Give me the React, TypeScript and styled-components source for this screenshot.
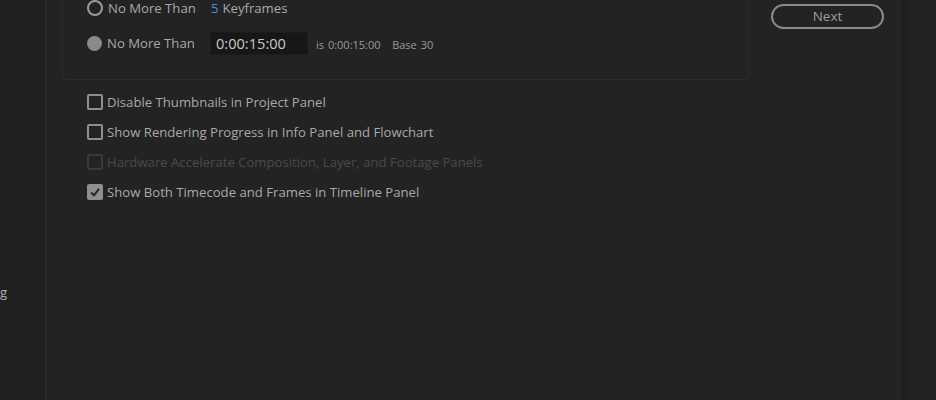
import React from "react";
import styled, { createGlobalStyle } from "styled-components";

const GlobalStyle = createGlobalStyle`
  html, body {
    margin: 0;
    padding: 0;
    background: #232323;
    overflow: hidden;
  }
  body {
    font-family: "Open Sans", "Noto Sans", sans-serif;
  }
`;

const Window = styled.div`
  display: flex;
  width: 936px;
  height: 400px;
  overflow: hidden;
  background: #232323;
`;

const Sidebar = styled.div`
  width: 45px;
  flex: none;
  background: #202020;
  border-right: 1px solid #2e2e2e;
  position: relative;
  overflow: hidden;
`;

const SideLabel = styled.span`
  position: absolute;
  right: 38px;
  top: 283px;
  font-size: 13px;
  color: #b4b4b4;
  white-space: nowrap;
`;

const Main = styled.div`
  flex: 1;
  display: flex;
  padding-left: 16px;
  padding-right: 18px;
`;

const Content = styled.div`
  width: 687px;
  display: flex;
  flex-direction: column;
`;

const Group = styled.div`
  margin-top: -30px;
  height: 110px;
  border: 1px solid #2c2c2c;
  border-top: none;
  border-radius: 0 0 3px 3px;
  padding: 30px 0 0 23px;
  box-sizing: border-box;
  display: flex;
  flex-direction: column;
`;

const Row = styled.div<{ $top?: number }>`
  display: flex;
  align-items: center;
  height: 16px;
  margin-top: ${(p) => p.$top ?? 0}px;
  gap: 5px;
`;

const Radio = styled.span<{ $filled?: boolean }>`
  width: ${(p) => (p.$filled ? 15 : 12)}px;
  height: ${(p) => (p.$filled ? 15 : 12)}px;
  border-radius: 50%;
  border: ${(p) => (p.$filled ? "none" : "2px solid #9a9a9a")};
  background: ${(p) => (p.$filled ? "#8a8a8a" : "transparent")};
  flex: none;
  margin-left: 1px;
`;

const Label = styled.span<{ $dim?: boolean }>`
  font-size: 13.15px;
  color: ${(p) => (p.$dim ? "#4a4a4a" : "#a9a9a9")};
  white-space: nowrap;
`;

const RadioLabel = styled(Label)`
  width: 98px;
`;

const Blue = styled.span`
  color: #4d8fd6;
  margin-right: 4px;
`;

const TimeInput = styled.div`
  width: 98px;
  height: 23px;
  box-sizing: border-box;
  background: #171717;
  border: 1px solid #1c1c1c;
  border-radius: 2px;
  color: #c8c8c8;
  font-size: 14.6px;
  padding-left: 5px;
  display: flex;
  align-items: center;
  flex: none;
`;

const Small = styled.span`
  font-size: 11px;
  color: #9a9a9a;
  margin-left: 3px;
  white-space: nowrap;
  padding-top: 2px;
  word-spacing: 1px;
`;

const Checks = styled.div`
  display: flex;
  flex-direction: column;
  padding: 7px 0 0 25px;
`;

const CheckRow = styled.div`
  display: flex;
  align-items: center;
  height: 30px;
  gap: 4px;
`;

const Box = styled.span<{ $dim?: boolean; $checked?: boolean }>`
  width: 16px;
  height: 16px;
  box-sizing: border-box;
  border: 2px solid ${(p) => (p.$dim ? "#3a3a3a" : "#8e8e8e")};
  border-radius: 2px;
  background: ${(p) => (p.$checked ? "#8e8e8e" : "transparent")};
  display: flex;
  align-items: center;
  justify-content: center;
  flex: none;
`;

const Side = styled.div`
  flex: 1;
  display: flex;
  justify-content: center;
  padding-top: 4px;
  padding-left: 22px;
`;

const NextButton = styled.button`
  width: 113px;
  height: 25px;
  border: 2px solid #8a8a8a;
  border-radius: 13px;
  background: transparent;
  color: #9c9c9c;
  font-family: "Open Sans", "Noto Sans", sans-serif;
  font-size: 13.5px;
  padding: 0;
  line-height: 1;
`;

const RightEdge = styled.div`
  width: 34px;
  flex: none;
  background: linear-gradient(to right, #1b1b1b 0px, #1f1f1f 4px, #222 10px, #232323 34px);
`;

const checks = [
  { text: "Disable Thumbnails in Project Panel" },
  { text: "Show Rendering Progress in Info Panel and Flowchart" },
  { text: "Hardware Accelerate Composition, Layer, and Footage Panels", dim: true },
  { text: "Show Both Timecode and Frames in Timeline Panel", checked: true },
];

export default function App() {
  return (
    <Window>
      <GlobalStyle />
      <Sidebar>
        <SideLabel>Rendering</SideLabel>
      </Sidebar>
      <Main>
        <Content>
          <Group>
            <Row>
              <Radio />
              <RadioLabel>No More Than</RadioLabel>
              <Label>
                <Blue>5</Blue>Keyframes
              </Label>
            </Row>
            <Row $top={19}>
              <Radio $filled />
              <RadioLabel>No More Than</RadioLabel>
              <TimeInput>0:00:15:00</TimeInput>
              <Small>is 0:00:15:00&nbsp;&nbsp;&nbsp;Base 30</Small>
            </Row>
          </Group>
          <Checks>
            {checks.map((c) => (
              <CheckRow key={c.text}>
                <Box $dim={c.dim} $checked={c.checked}>
                  {c.checked && (
                    <svg width="12" height="12" viewBox="0 0 12 12">
                      <path d="M2 6.5 L5 9.2 L10 2.8" fill="none" stroke="#262626" strokeWidth="2" />
                    </svg>
                  )}
                </Box>
                <Label $dim={c.dim}>{c.text}</Label>
              </CheckRow>
            ))}
          </Checks>
        </Content>
        <Side>
          <NextButton>Next</NextButton>
        </Side>
      </Main>
      <RightEdge />
    </Window>
  );
}
